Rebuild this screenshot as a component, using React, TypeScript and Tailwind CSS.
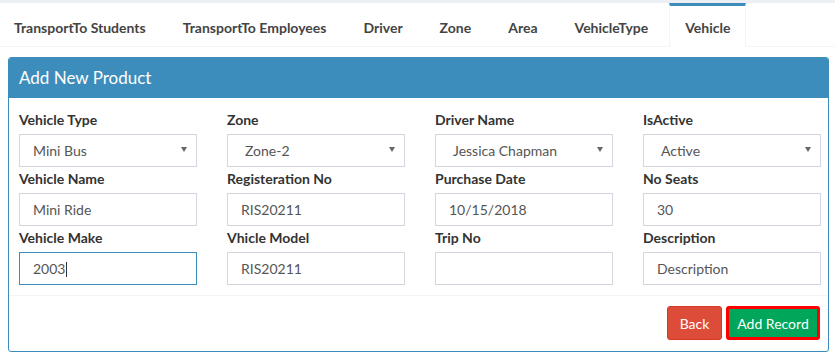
import React from 'react';

const tabs = ['TransportTo Students', 'TransportTo Employees', 'Driver', 'Zone', 'Area', 'VehicleType', 'Vehicle'];

type Field = { label: string; value?: string; kind: 'select' | 'input'; focus?: boolean; placeholder?: string; pad?: string };

const rows: Field[][] = [
  [
    { label: 'Vehicle Type', value: 'Mini Bus', kind: 'select', pad: 'pl-[13px]' },
    { label: 'Zone', value: 'Zone-2', kind: 'select', pad: 'pl-[17px]' },
    { label: 'Driver Name', value: 'Jessica Chapman', kind: 'select', pad: 'pl-[17px]' },
    { label: 'IsActive', value: 'Active', kind: 'select', pad: 'pl-[17px]' },
  ],
  [
    { label: 'Vehicle Name', value: 'Mini Ride', kind: 'input' },
    { label: 'Registeration No', value: 'RIS20211', kind: 'input' },
    { label: 'Purchase Date', value: '10/15/2018', kind: 'input' },
    { label: 'No Seats', value: '30', kind: 'input' },
  ],
  [
    { label: 'Vehicle Make', value: '2003', kind: 'input', focus: true },
    { label: 'Vhicle Model', value: 'RIS20211', kind: 'input' },
    { label: 'Trip No', value: '', kind: 'input' },
    { label: 'Description', placeholder: 'Description', kind: 'input' },
  ],
];

const FieldBox: React.FC<{ f: Field }> = ({ f }) => (
  <div className="flex flex-col pb-[2px]">
    <label className="h-[20px] text-[14px] font-bold leading-[20px] text-[#333]">{f.label}</label>
    <div
      className={`mt-[4px] flex h-[33px] items-center border pr-[9px] text-[14px] text-[#555] ${f.pad ?? 'pl-[13px]'} ${
        f.focus ? 'border-[#3c8dbc]' : 'border-[#d2d6de]'
      }`}
    >
      <span className="flex-1">
        {f.value}
        {f.focus && <span className="ml-[1px] inline-block h-[15px] w-px translate-y-[3px] bg-[#333]" />}
        {f.placeholder && <span className="text-[#555]">{f.placeholder}</span>}
      </span>
      {f.kind === 'select' && (
        <svg width="6" height="5" viewBox="0 0 6 5" className="mb-[2px]">
          <path d="M0 0H6L3 5Z" fill="#666" />
        </svg>
      )}
    </div>
  </div>
);

export default function App() {
  return (
    <div className="h-[356px] w-[835px] bg-white font-['Lato',sans-serif]">
      <div className="h-[3px] bg-[#ecf0f5]" />
      <div className="flex h-[44px] border-b border-[#f4f4f4]">
        <div className="ml-[-2px] flex">
          {tabs.map((t) => {
            const active = t === 'Vehicle';
            return (
              <div
                key={t}
                className={`mr-[5px] mb-[-1px] flex h-[44px] border-x border-t-[3px] px-[15px] pt-[12px] text-[14px] font-bold leading-[20px] text-[#444] ${
                  active ? 'border-x-[#f4f4f4] border-t-[#3c8dbc] bg-white' : 'border-transparent'
                }`}
              >
                {t}
              </div>
            );
          })}
        </div>
      </div>
      <div className="ml-[8px] mt-[10px] h-[295px] w-[821px] overflow-hidden rounded-[3px] border border-[#3c8dbc]">
        <div className="flex h-[40px] items-center bg-[#3c8dbc] pl-[10px] text-[17px] text-white">Add New Product</div>
        <div className="flex flex-col border-b border-[#f4f4f4] pl-[10px] pb-[8px] pt-[12px]">
          {rows.map((r, i) => (
            <div key={i} className="grid grid-cols-[repeat(4,178px)] gap-x-[30px]">
              {r.map((f) => (
                <FieldBox key={f.label} f={f} />
              ))}
            </div>
          ))}
        </div>
        <div className="flex justify-end gap-[4px] pr-[8px] pt-[10px]">
          <button className="h-[34px] w-[55px] rounded-[3px] border border-[#d73925] bg-[#dd4b39] text-[14px] text-white">Back</button>
          <button className="h-[34px] w-[94px] rounded-[3px] border-[3px] border-[#ff0000] bg-[#00a65a] text-[14px] text-white">Add Record</button>
        </div>
      </div>
    </div>
  );
}
